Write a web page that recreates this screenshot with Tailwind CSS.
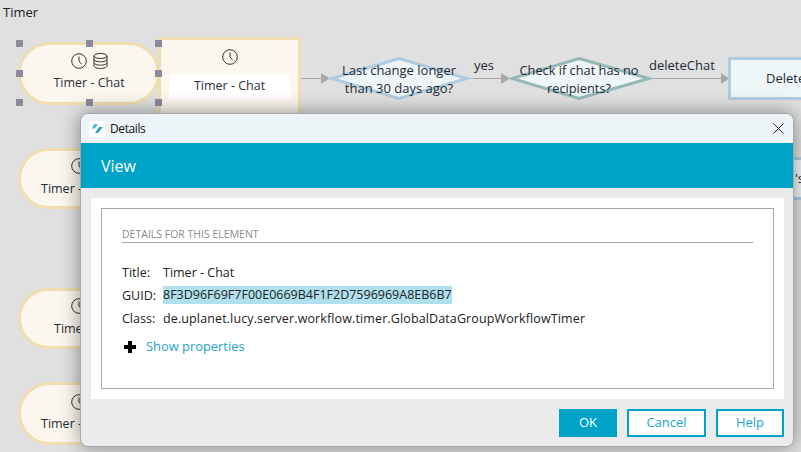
<!DOCTYPE html>
<html><head><meta charset="utf-8"><script src="https://cdn.jsdelivr.net/npm/@tailwindcss/browser@4"></script></head>
<body class="m-0">
<div class="relative w-[801px] h-[452px] overflow-hidden bg-[#e0e0e0] font-['Open_Sans',sans-serif] text-[13px] text-[#222a35]">
  <div class="absolute left-[3px] top-[3px] text-[13px] leading-[18px] text-[#1a1a1a]">Timer</div>

  <svg class="absolute left-0 top-0" width="801" height="452" fill="none">
    <path d="M299 78.500H322M470 78.500H502M651 78.500H722" stroke="#a8a8a8" stroke-width="1"/>
    <path d="M321 73l9 5.500-9 5.500zM501 73l9 5.500-9 5.500zM721 73l8 5.500-8 5.500z" fill="#a8a8a8"/>
    <path d="M399 58.500L467 78.500 399 98.500 332 78.500Z" fill="#eff6f8" stroke="#b0cbe0" stroke-width="3"/>
    <path d="M579 58.500L649 78.500 579 98.500 512 78.500Z" fill="#eff6f8" stroke="#94b8b8" stroke-width="3"/>
  </svg>

  <div class="absolute left-[18px] top-[42px] w-[142px] h-[63px] rounded-[32px] border-[3px] border-[#f1deb0] bg-[#fbf7ef] flex flex-col items-center pt-[7px]">
    <div class="flex gap-[6px] h-[17px] items-center">
      <svg width="16" height="16" viewBox="0 0 16 16" fill="none" stroke="#333" stroke-width="1"><circle cx="8" cy="8" r="7.300"/><path d="M8 3.500V8L10.500 11"/></svg>
      <svg width="15" height="16" viewBox="0 0 15 16" fill="none" stroke="#333" stroke-width="1"><ellipse cx="7.500" cy="3" rx="6.500" ry="2.500"/><path d="M1 3V13C1 14.400 4 15.500 7.500 15.500S14 14.400 14 13V3M1 6.300C1 7.700 4 8.800 7.500 8.800S14 7.700 14 6.300M1 9.700C1 11.100 4 12.200 7.500 12.200S14 11.100 14 9.700"/></svg>
    </div>
    <div class="mt-[5px] leading-[18px] text-[12.500px] text-[#2a3040]">Timer - Chat</div>
  </div>

  <div class="absolute left-[158px] top-[37px] w-[143px] h-[91px] border-[3px] border-[#f1deb0] bg-[#fbf7ef] flex flex-col items-center pt-[9px]">
    <svg width="16" height="16" viewBox="0 0 16 16" fill="none" stroke="#333" stroke-width="1"><circle cx="8" cy="8" r="7.300"/><path d="M8 3.500V8L10.500 11"/></svg>
    <div class="mt-[9px] w-[121px] h-[25px] bg-white flex items-center justify-center text-[12.500px] text-[#2a3040]">Timer - Chat</div>
  </div>

  <div class="absolute left-[16px] top-[40px] w-[7px] h-[7px] bg-[#8e8a9e]"></div>
  <div class="absolute left-[86px] top-[40px] w-[7px] h-[7px] bg-[#8e8a9e]"></div>
  <div class="absolute left-[155px] top-[40px] w-[7px] h-[7px] bg-[#8e8a9e]"></div>
  <div class="absolute left-[16px] top-[70px] w-[7px] h-[7px] bg-[#8e8a9e]"></div>
  <div class="absolute left-[155px] top-[70px] w-[7px] h-[7px] bg-[#8e8a9e]"></div>
  <div class="absolute left-[16px] top-[99px] w-[7px] h-[7px] bg-[#8e8a9e]"></div>
  <div class="absolute left-[86px] top-[99px] w-[7px] h-[7px] bg-[#8e8a9e]"></div>
  <div class="absolute left-[155px] top-[99px] w-[7px] h-[7px] bg-[#8e8a9e]"></div>

  <div class="absolute left-[329px] top-[61px] w-[140px] text-center leading-[18px]">Last change longer<br>than 30 days ago?</div>
  <div class="absolute left-[509px] top-[61px] w-[140px] text-center leading-[18px] text-[12.800px]">Check if chat has no<br>recipients?</div>
  <div class="absolute left-[474px] top-[56px] leading-[18px]">yes</div>
  <div class="absolute left-[649px] top-[56px] leading-[18px]">deleteChat</div>

  <div class="absolute left-[728px] top-[57px] w-[100px] h-[43px] border-[3px] border-[#b0cbe0] bg-[#eff6f8] pl-[35px] leading-[37px]">Delete</div>
  <div class="absolute left-[780px] top-[157px] w-[40px] h-[43px] border-y-[3px] border-[#b0cbe0] bg-[#eff6f8] pl-[15px] leading-[37px]">'s</div>

  <div class="absolute left-[18px] top-[148px] w-[142px] h-[61px] rounded-[32px] border-[3px] border-[#f1deb0] bg-[#fbf7ef] pl-[20px] leading-[18px] pt-[29px] text-[12.500px]">Timer - Chat
    <svg class="absolute left-[50px] top-[7px]" width="16" height="16" viewBox="0 0 16 16" fill="none" stroke="#333" stroke-width="1"><circle cx="8" cy="8" r="7.300"/><path d="M8 3.500V8L10.500 11"/></svg></div>
  <div class="absolute left-[18px] top-[288px] w-[142px] h-[61px] rounded-[32px] border-[3px] border-[#f1deb0] bg-[#fbf7ef] pl-[33px] leading-[18px] pt-[29px] text-[12.500px]">Timer - Chat
    <svg class="absolute left-[50px] top-[7px]" width="16" height="16" viewBox="0 0 16 16" fill="none" stroke="#333" stroke-width="1"><circle cx="8" cy="8" r="7.300"/><path d="M8 3.500V8L10.500 11"/></svg></div>
  <div class="absolute left-[18px] top-[382px] w-[142px] h-[63px] rounded-[32px] border-[3px] border-[#f1deb0] bg-[#fbf7ef] pl-[20px] leading-[18px] pt-[30px] text-[12.500px]">Timer - Chat
    <svg class="absolute left-[50px] top-[9px]" width="16" height="16" viewBox="0 0 16 16" fill="none" stroke="#333" stroke-width="1"><circle cx="8" cy="8" r="7.300"/><path d="M8 3.500V8L10.500 11"/></svg></div>

  <div class="absolute left-[80px] top-[113px] w-[714px] h-[334px] rounded-[8px] bg-[#ebebeb] border border-[#a8a8a8] shadow-[0_0_20px_rgba(0,0,0,0.42)] flex flex-col overflow-hidden text-[#222]">
    <div class="h-[29px] bg-[#edf4f7] flex items-center pl-[8px] pr-[8px] shrink-0">
      <div class="w-4 h-4 bg-white flex items-center justify-center">
        <svg width="13" height="11" viewBox="0 0 13 11"><path d="M3 1H7L4 5.500H1Z" fill="#4fb9d6"/><path d="M8 4H12L7 10H4Z" fill="#2ca5c8"/></svg>
      </div>
      <span class="ml-[5px] text-[12px] tracking-[-0.4px] text-[#111] leading-none">Details</span>
      <svg class="ml-auto mr-[1px]" width="11" height="11" viewBox="0 0 11 11" stroke="#222" stroke-width="1"><path d="M0.500 0.500L10.500 10.500M10.500 0.500L0.500 10.500"/></svg>
    </div>
    <div class="h-[45px] bg-[#00a3c8] text-white text-[16px] pl-[20px] flex items-center shrink-0">View</div>
    <div class="ml-[10px] mr-[9px] mt-[10px] h-[201px] bg-white p-[10px] shrink-0">
      <div class="h-[181px] border border-[#a8a8a8] px-[20px] pt-[17px]">
        <div class="border-b border-[#a8a8a8] text-[10.500px] leading-[16px] h-[17px] text-[#8c8c8c] uppercase">Details for this element</div>
        <div class="mt-[18px] grid grid-cols-[41px_1fr] text-[12.500px] leading-[23px] text-[#222]">
          <span>Title:</span><span>Timer - Chat</span>
          <span>GUID:</span><span class="block w-fit mt-[2px] h-[18px] bg-[#b0e0ee] leading-[18px]">8F3D96F69F7F00E0669B4F1F2D7596969A8EB6B7</span>
          <span>Class:</span><span class="tracking-[0.12px]">de.uplanet.lucy.server.workflow.timer.GlobalDataGroupWorkflowTimer</span>
        </div>
        <div class="mt-[8px] flex items-center h-[18px]">
          <svg class="ml-[2px]" width="12" height="12" viewBox="0 0 12 12" fill="#000"><path d="M4 0H8V4H12V8H8V12H4V8H0V4H4Z"/></svg>
          <span class="ml-[10px] text-[12.900px] text-[#22a5cb]">Show properties</span>
        </div>
      </div>
    </div>
    <div class="flex justify-end gap-[10px] mt-[10px] mr-[9px] text-[13px]">
      <button class="w-[58px] h-[28px] bg-[#00a3c8] text-white">OK</button>
      <button class="w-[79px] h-[28px] bg-white border-[2px] border-[#00a3c8] text-[#22a5cb]">Cancel</button>
      <button class="w-[68px] h-[28px] bg-white border-[2px] border-[#00a3c8] text-[#22a5cb]">Help</button>
    </div>
  </div>
</div>
</body></html>
